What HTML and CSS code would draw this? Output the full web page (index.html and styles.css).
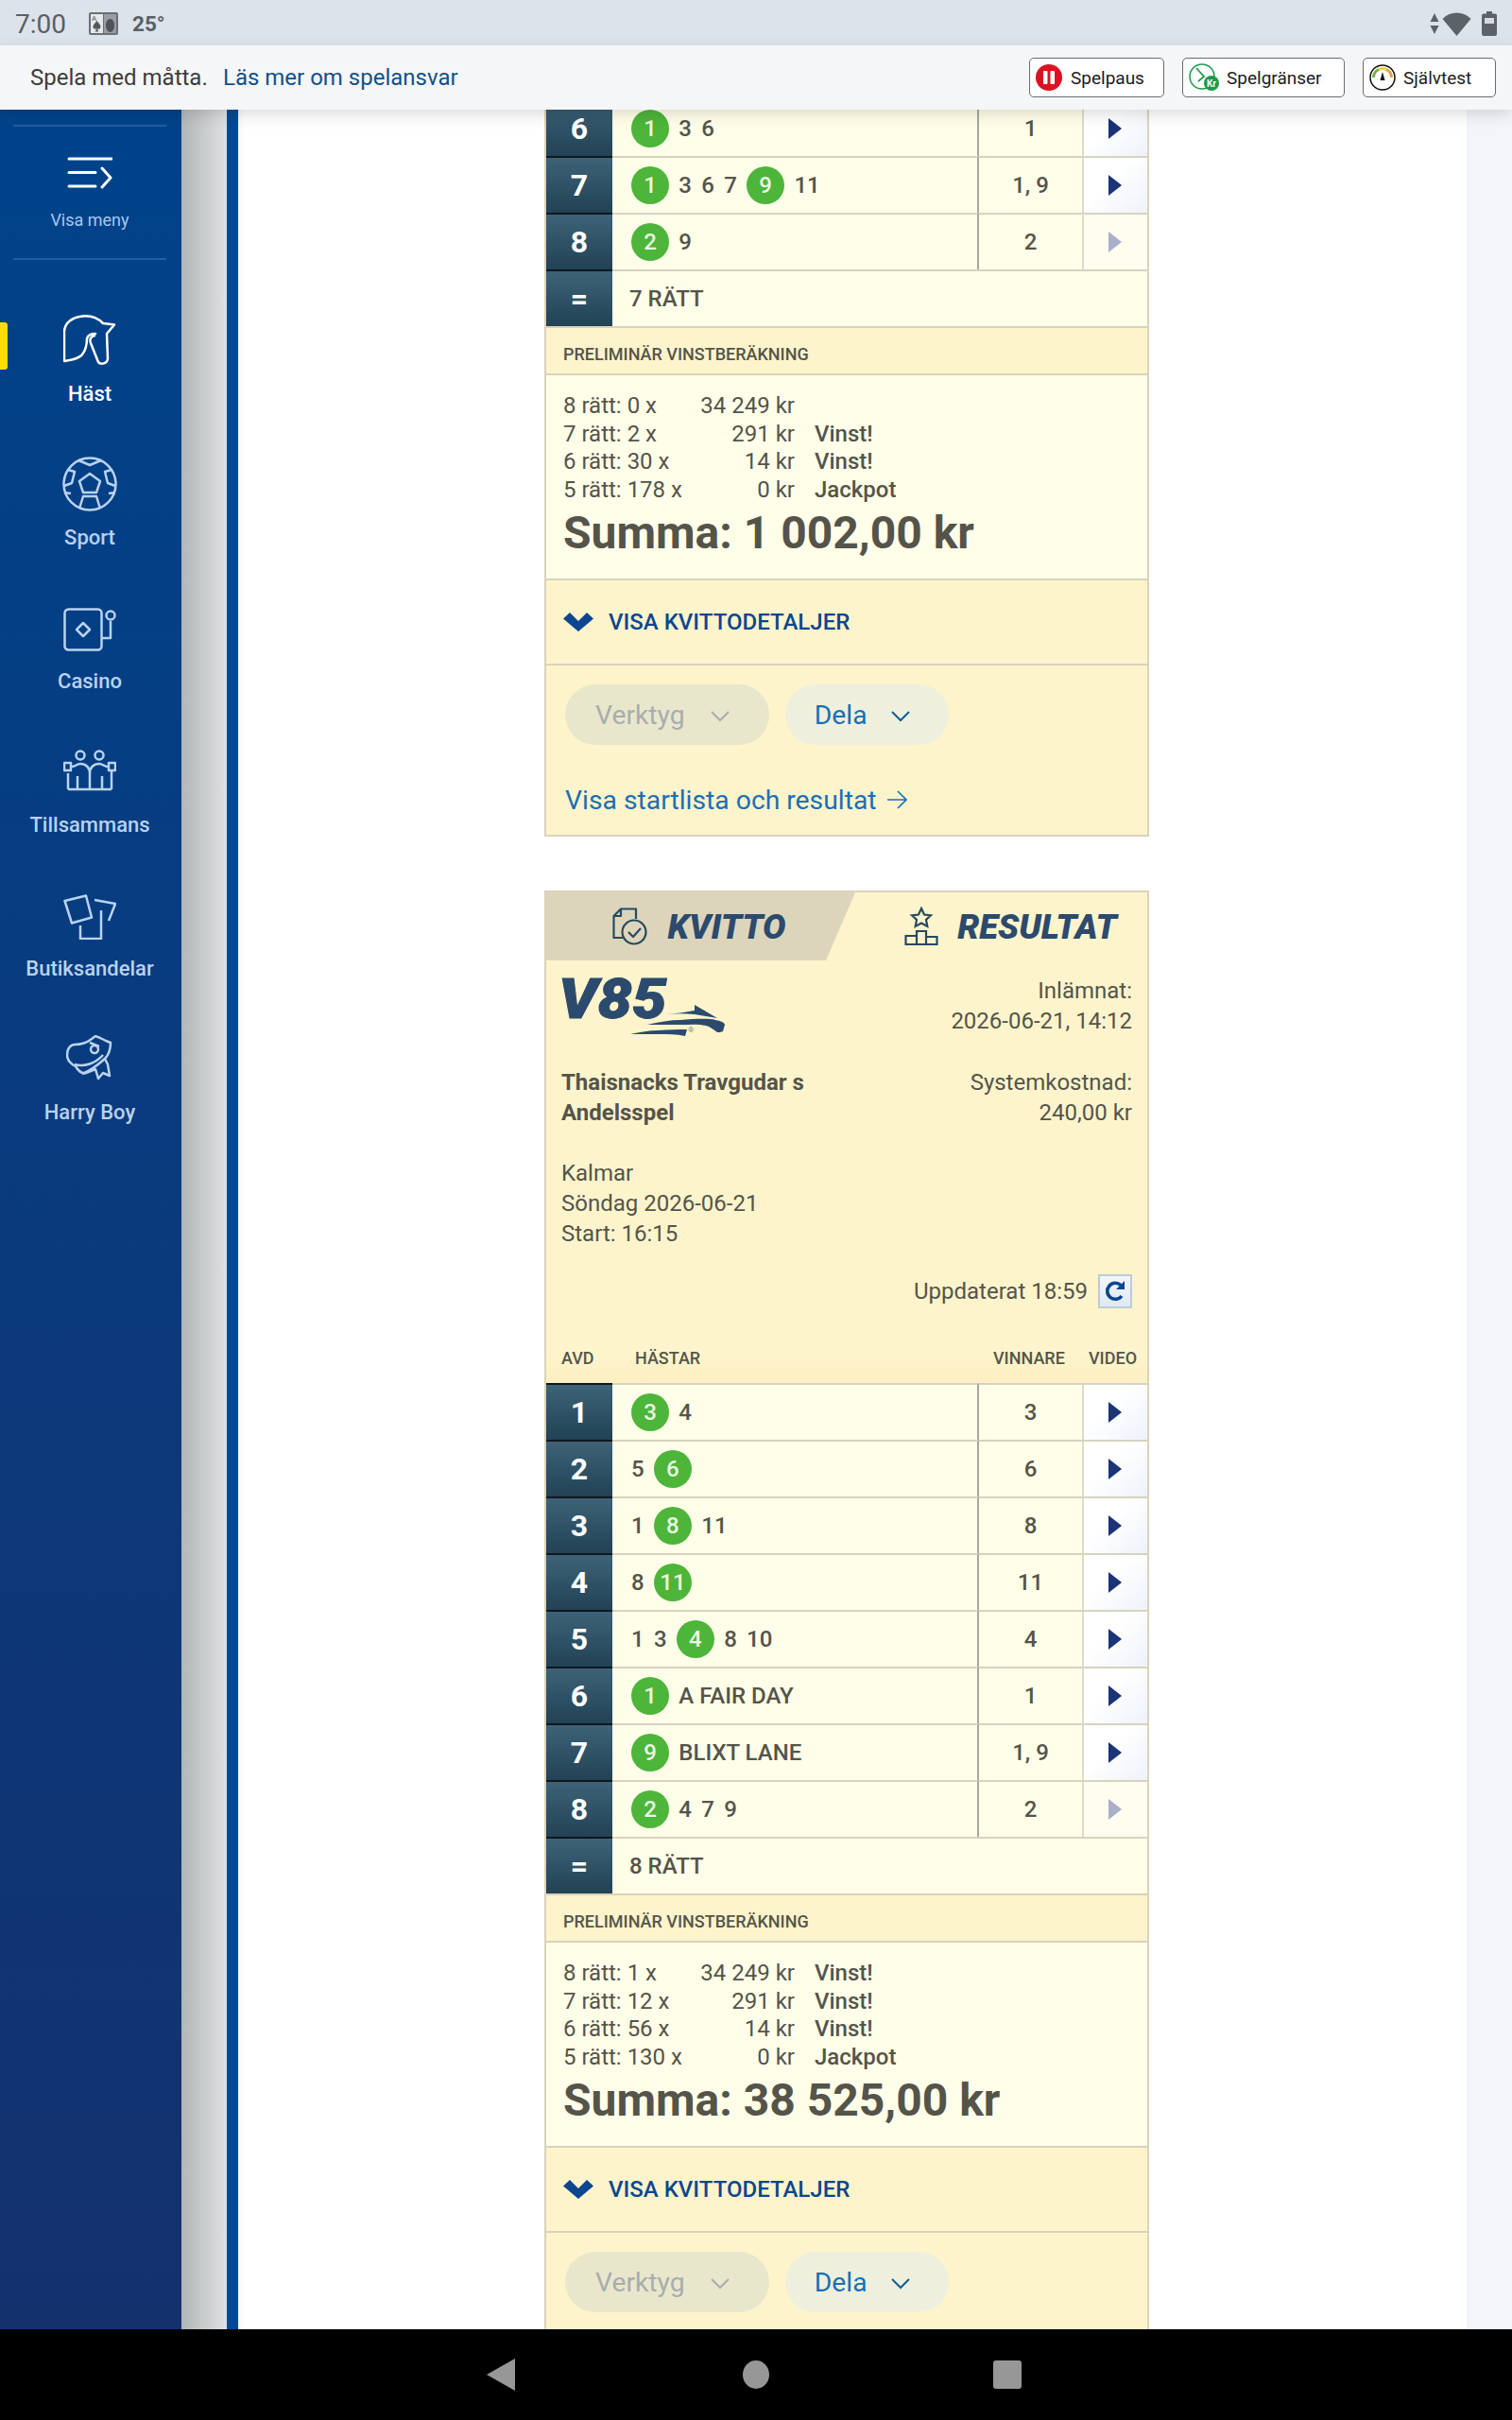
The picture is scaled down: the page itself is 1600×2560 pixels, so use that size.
FILE: index.html
```html
<!DOCTYPE html>
<html lang="sv">
<head>
<meta charset="UTF-8">
<meta name="viewport" content="width=device-width, initial-scale=1.0">
<title>Kvitto</title>
<link rel="stylesheet" href="styles.css">
</head>
<body>
<div class="status-bar">
  <span class="clock">7:00</span>
  <svg class="notif" width="31" height="24" viewBox="0 0 31 24">
    <rect width="31" height="24" rx="2" fill="#6a6f76"/>
    <rect x="2" y="2" width="13" height="20" fill="#e6e8ea"/>
    <rect x="16" y="2" width="13" height="20" fill="#9a9ea4"/>
    <text x="3" y="9" class="card-mark">A</text>
    <path d="M8.500 9c3 4 5 5 3.500 8-1 1-2.500 1-3-.5.300 2 .6 3 1.500 4h-4c.900-1 1.200-2 1.500-4-.5 1.500-2 1.500-3 .5C3.500 14 5.500 13 8.500 9z" fill="#55595f"/>
    <path d="M22.500 7c3 0 4.500 3 4.500 7s-2 7-4.500 7-4.500-3-4.500-7 1.500-7 4.500-7z" fill="#50545a"/>
  </svg>
  <span class="temp">25°</span>
  <span class="status-right">
    <svg width="10" height="22" viewBox="0 0 10 22"><path d="M5 0l4.500 9H.5zM5 22L.5 13h9z" fill="#5d6269"/></svg>
    <svg width="31" height="25" viewBox="0 0 31 25"><path d="M15.500 25L.5 7C5 2.500 10 .5 15.500.5S26 2.500 30.500 7z" fill="#5d6269"/></svg>
    <svg class="batt" width="16" height="26" viewBox="0 0 16 26"><path d="M5 0h6v2.500h3a2 2 0 0 1 2 2V24a2 2 0 0 1-2 2H2a2 2 0 0 1-2-2V4.500a2 2 0 0 1 2-2h3z" fill="#5d6269"/><rect x="3" y="7" width="10" height="6" fill="#d5dae0"/></svg>
  </span>
</div>

<div class="top-bar">
  <span class="top-text">Spela med måtta.</span>
  <a class="top-link">Läs mer om spelansvar</a>
  <div class="top-btns">
    <div class="top-btn btn-paus">
      <svg width="28" height="28" viewBox="0 0 28 28"><circle cx="14" cy="14" r="14" fill="#dd1122"/><rect x="8" y="7" width="4.500" height="14" rx="1" fill="#fff"/><rect x="15.500" y="7" width="4.500" height="14" rx="1" fill="#fff"/></svg>
      Spelpaus
    </div>
    <div class="top-btn btn-grans">
      <svg width="32" height="30" viewBox="0 0 32 30"><circle cx="14" cy="14" r="13" fill="none" stroke="#1b9a4b" stroke-width="1.500"/><path d="M8 5l8 9-6 5" fill="none" stroke="#1b9a4b" stroke-width="1.800"/><circle cx="24" cy="21" r="8" fill="#1b9a4b"/><text x="24" y="25" class="kr-mark">Kr</text></svg>
      Spelgränser
    </div>
    <div class="top-btn btn-test">
      <svg width="28" height="28" viewBox="0 0 28 28"><circle cx="14" cy="14" r="13" fill="#fff" stroke="#111" stroke-width="1.500"/><path d="M4.500 14A9.500 9.500 0 0 1 10 5.500" fill="none" stroke="#6fb043" stroke-width="3"/><path d="M10 5.500a9.500 9.500 0 0 1 8 0" fill="none" stroke="#e6d34a" stroke-width="3"/><path d="M18 5.500A9.500 9.500 0 0 1 23.500 14" fill="none" stroke="#e8a23a" stroke-width="3"/><path d="M14 8l2.500 9h-5z" fill="#111"/></svg>
      Självtest
    </div>
  </div>
</div>

<div class="main">
  <nav class="sidebar">
    <div class="menu-toggle">
      <svg width="48" height="34" viewBox="0 0 48 34" fill="none" stroke="#fff" stroke-width="3" stroke-linecap="round" stroke-linejoin="round"><path d="M2 2h45M2 16.500h28M2 31h28M37 12l9 10-9 10"/></svg>
      <span>Visa meny</span>
    </div>
    <div class="nav-item active">
      <svg width="56" height="56" viewBox="8 8 56 56" fill="none" stroke="#fff" stroke-width="2.500" stroke-linejoin="round" stroke-linecap="round"><path d="M9 57V25c1-9 9-14 16-15 10-2 19 1 25 7l12 1.500L54 28l1 26c0 6-8 7-10 4l-4-10-4-10c-1.500-4 0-7 4-8M9 57c7-1 15-2 19-7 5-6 5-12 5-17 1-3 4-5 9-5"/></svg>
      <span>Häst</span>
    </div>
    <div class="nav-item">
      <svg width="58" height="58" viewBox="0 0 58 58" fill="none" stroke="currentColor" stroke-width="2.500" stroke-linejoin="round"><ellipse cx="29" cy="29" rx="27.500" ry="27.500"/><path d="M29 18l11 8-4 12H22l-4-12zM17 4l12 5 12-5M6 14l7 2-3 12-8 3M52 14l-7 2 3 12 8 3M18 55l4-13h14l4 13M2 38l7 1M56 38l-7 1"/></svg>
      <span>Sport</span>
    </div>
    <div class="nav-item">
      <svg class="lift-4" width="56" height="46" viewBox="0 0 56 46" fill="none" stroke="currentColor" stroke-width="2.500" stroke-linejoin="round"><rect x="1.500" y="1.500" width="39" height="43" rx="4"/><path d="M21 16l7 7-7 7-7-7zM40.500 32H50V14"/><circle cx="50" cy="8" r="4.500"/></svg>
      <span>Casino</span>
    </div>
    <div class="nav-item">
      <svg class="lift-8" width="56" height="44" viewBox="0 0 56 44" fill="none" stroke="currentColor" stroke-width="2.500" stroke-linejoin="round"><circle cx="18" cy="6" r="4.500"/><circle cx="38" cy="6" r="4.500"/><path d="M5 42V25M1 14h7v8H1zM48 14h7v8h-7zM51 22v20M5 42h46M9 18c4 0 5-3 9-3 6 0 10 4 10 10v17M47 18c-4 0-5-3-9-3-6 0-10 4-10 10M15 28v14M41 28v14"/></svg>
      <span>Tillsammans</span>
    </div>
    <div class="nav-item">
      <svg class="lift-3" width="56" height="48" viewBox="0 0 56 48" fill="none" stroke="currentColor" stroke-width="2.500" stroke-linejoin="round"><path d="M1.500 7L24 1.500l6 23-21 6zM33 6l22 4-7 18M40 17v30H18V33"/></svg>
      <span>Butiksandelar</span>
    </div>
    <div class="nav-item">
      <svg class="lift-4" width="50" height="50" viewBox="11 12 50 50" fill="none" stroke="currentColor" stroke-width="2.500" stroke-linejoin="round"><path d="M20 22c-5 0-8 5-8 11s5 10 9 12c3 5 7 8 11 7l10-4 3 10 5-6 7 3-2-12-3-6c4-4 6-11 6-17l-5-2-6-3-5-2-4 3c-5 4-10 6-18 6z"/><path d="M20 43c10 3 22-1 30-10M28 53c8-3 16-9 24-16M36 20l10 4"/><circle cx="41" cy="27" r="4"/></svg>
      <span>Harry Boy</span>
    </div>
  </nav>
  <div class="gutter"></div>
  <div class="blue-rule"></div>

  <div class="content">
    <!-- first receipt, scrolled so only the tail of it shows -->
    <div class="card card-first">
      <div class="row">
        <div class="avd">6</div>
        <div class="horses"><span class="win">1</span><span>3</span><span>6</span></div>
        <div class="winner">1</div>
        <div class="video"><span class="play"></span></div>
      </div>
      <div class="row">
        <div class="avd">7</div>
        <div class="horses"><span class="win">1</span><span>3</span><span>6</span><span>7</span><span class="win">9</span><span>11</span></div>
        <div class="winner">1, 9</div>
        <div class="video"><span class="play"></span></div>
      </div>
      <div class="row">
        <div class="avd">8</div>
        <div class="horses"><span class="win">2</span><span>9</span></div>
        <div class="winner">2</div>
        <div class="video off"><span class="play"></span></div>
      </div>
      <div class="row row-sum">
        <div class="avd">=</div>
        <div class="ratt">7 RÄTT</div>
      </div>
      <div class="prelim-head">PRELIMINÄR VINSTBERÄKNING</div>
      <div class="prelim">
        <div class="payout">
          <span>8 rätt: 0 x</span><span class="amt">34 249 kr</span><b></b>
          <span>7 rätt: 2 x</span><span class="amt">291 kr</span><b>Vinst!</b>
          <span>6 rätt: 30 x</span><span class="amt">14 kr</span><b>Vinst!</b>
          <span>5 rätt: 178 x</span><span class="amt">0 kr</span><b>Jackpot</b>
        </div>
        <div class="summa">Summa: 1 002,00 kr</div>
      </div>
      <div class="details">
        <svg width="32" height="20" viewBox="0 0 32 20"><path d="M0 6.500L7 0l9 9 9-9 7 6.500L16 20z" fill="#0c468f"/></svg>
        VISA KVITTODETALJER
      </div>
      <div class="actions">
        <div class="pill pill-off">Verktyg
          <svg width="20" height="12" viewBox="0 0 20 12" fill="none" stroke="currentColor" stroke-width="2"><path d="M1 1l9 9 9-9"/></svg>
        </div>
        <div class="pill pill-dela">Dela
          <svg width="20" height="12" viewBox="0 0 20 12" fill="none" stroke="#0f5f94" stroke-width="2"><path d="M1 1l9 9 9-9"/></svg>
        </div>
      </div>
      <div class="start-link">Visa startlista och resultat
        <svg width="21" height="20" viewBox="0 0 21 20" fill="none" stroke="currentColor" stroke-width="1.600"><path d="M0 10h20M11 1l9 9-9 9"/></svg>
      </div>
    </div>

    <div class="card card-last">
      <div class="tabs">
        <div class="tab tab-on">
          <svg width="38" height="40" viewBox="0 0 38 40" fill="none" stroke="#27495f" stroke-width="2.200" stroke-linejoin="round"><path d="M11 32H1.500V9L9 1.500h16V12M9 1.500V9H1.500"/><circle cx="23" cy="26" r="12.500"/><path d="M17 26l5 5 8-9"/></svg>
          KVITTO
        </div>
        <div class="tab tab-off">
          <svg width="36" height="42" viewBox="0 0 36 42" fill="none" stroke="#27495f" stroke-width="2.200" stroke-linejoin="miter"><path d="M18 2l3 6.500 7 .8-5 4.700 1.300 7-6.300-3.500-6.300 3.500 1.300-7-5-4.700 7-.8zM13 26h10v14H13zM1.500 31H13v9H1.500zM23 32h11.500v8H23z"/></svg>
          RESULTAT
        </div>
      </div>
      <div class="info">
        <div class="info-left">
          <div class="logo">
            <span class="logo-text">V85</span>
            <svg class="logo-horse" width="100" height="36" viewBox="0 0 100 36"><path fill="#2c4a6d" d="M38 11C48 10 58 9 68 7V1l24 14-24-4C58 10 48 10 38 11zM18 22C30 19 42 17 53 17c14-1 30-2 37 0 6 1 10 3 10 5l-2 7c-2 1-4 1-6 1-4-3-8-6-12-7-8-2-18-1-27-1-12 0-24 0-35 0zM0 32c10-2 20-4 30-4 10-1 20-1 30-1l-2 7c-9-2-18-2-28-2-10 0-20 0-30 0z"/></svg>
            <span class="logo-reg">®</span>
          </div>
          <div class="team">Thaisnacks Travgudar s<br>Andelsspel</div>
          <div class="meet">Kalmar<br>Söndag 2026-06-21<br>Start: 16:15</div>
        </div>
        <div class="info-right">
          <div>Inlämnat:<br>2026-06-21, 14:12</div>
          <div class="cost">Systemkostnad:<br>240,00 kr</div>
        </div>
      </div>
      <div class="updated">Uppdaterat 18:59
        <div class="refresh">
          <svg width="22" height="24" viewBox="0 0 22 24" fill="none"><path d="M18 17a8.500 8.500 0 1 1-1-11.500" stroke="#0c468f" stroke-width="3.600"/><path d="M21 1v9h-9z" fill="#0c468f"/></svg>
        </div>
      </div>
      <div class="table-head">
        <span class="th-avd">AVD</span>
        <span class="th-horses">HÄSTAR</span>
        <span class="th-win">VINNARE</span>
        <span class="th-video">VIDEO</span>
      </div>
      <div class="row">
        <div class="avd">1</div>
        <div class="horses"><span class="win">3</span><span>4</span></div>
        <div class="winner">3</div>
        <div class="video"><span class="play"></span></div>
      </div>
      <div class="row">
        <div class="avd">2</div>
        <div class="horses"><span>5</span><span class="win">6</span></div>
        <div class="winner">6</div>
        <div class="video"><span class="play"></span></div>
      </div>
      <div class="row">
        <div class="avd">3</div>
        <div class="horses"><span>1</span><span class="win">8</span><span>11</span></div>
        <div class="winner">8</div>
        <div class="video"><span class="play"></span></div>
      </div>
      <div class="row">
        <div class="avd">4</div>
        <div class="horses"><span>8</span><span class="win">11</span></div>
        <div class="winner">11</div>
        <div class="video"><span class="play"></span></div>
      </div>
      <div class="row">
        <div class="avd">5</div>
        <div class="horses"><span>1</span><span>3</span><span class="win">4</span><span>8</span><span>10</span></div>
        <div class="winner">4</div>
        <div class="video"><span class="play"></span></div>
      </div>
      <div class="row">
        <div class="avd">6</div>
        <div class="horses"><span class="win">1</span><span>A FAIR DAY</span></div>
        <div class="winner">1</div>
        <div class="video"><span class="play"></span></div>
      </div>
      <div class="row">
        <div class="avd">7</div>
        <div class="horses"><span class="win">9</span><span>BLIXT LANE</span></div>
        <div class="winner">1, 9</div>
        <div class="video"><span class="play"></span></div>
      </div>
      <div class="row">
        <div class="avd">8</div>
        <div class="horses"><span class="win">2</span><span>4</span><span>7</span><span>9</span></div>
        <div class="winner">2</div>
        <div class="video off"><span class="play"></span></div>
      </div>
      <div class="row row-sum">
        <div class="avd">=</div>
        <div class="ratt">8 RÄTT</div>
      </div>
      <div class="prelim-head">PRELIMINÄR VINSTBERÄKNING</div>
      <div class="prelim">
        <div class="payout">
          <span>8 rätt: 1 x</span><span class="amt">34 249 kr</span><b>Vinst!</b>
          <span>7 rätt: 12 x</span><span class="amt">291 kr</span><b>Vinst!</b>
          <span>6 rätt: 56 x</span><span class="amt">14 kr</span><b>Vinst!</b>
          <span>5 rätt: 130 x</span><span class="amt">0 kr</span><b>Jackpot</b>
        </div>
        <div class="summa">Summa: 38 525,00 kr</div>
      </div>
      <div class="details">
        <svg width="32" height="20" viewBox="0 0 32 20"><path d="M0 6.500L7 0l9 9 9-9 7 6.500L16 20z" fill="#0c468f"/></svg>
        VISA KVITTODETALJER
      </div>
      <div class="actions">
        <div class="pill pill-off">Verktyg
          <svg width="20" height="12" viewBox="0 0 20 12" fill="none" stroke="currentColor" stroke-width="2"><path d="M1 1l9 9 9-9"/></svg>
        </div>
        <div class="pill pill-dela">Dela
          <svg width="20" height="12" viewBox="0 0 20 12" fill="none" stroke="#0f5f94" stroke-width="2"><path d="M1 1l9 9 9-9"/></svg>
        </div>
      </div>
    </div>
  </div>
  <div class="right-edge"></div>
</div>

<div class="nav-bar">
  <svg width="30" height="34" viewBox="0 0 30 34"><path d="M30 0v34L0 17z" fill="#979797"/></svg>
  <span class="nav-home"></span>
  <span class="nav-recent"></span>
</div>
</body>
</html>
```

FILE: styles.css
```css
* {
  box-sizing: border-box;
}
html, body {
  margin: 0;
  padding: 0;
}
body {
  width: 1600px;
  height: 2560px;
  overflow: hidden;
  display: flex;
  flex-direction: column;
  font-family: Roboto, 'Liberation Sans', sans-serif;
  font-size: 24px;
  color: #55544a;
  background: #fff;
}
svg {
  display: block;
  flex-shrink: 0;
}

/* android status bar */
.status-bar {
  height: 48px;
  flex-shrink: 0;
  display: flex;
  align-items: center;
  padding: 2px 16px 0;
  background: #dde3ea;
  color: #5a5f66;
}
.clock {
  font-size: 28px;
  width: 78px;
}
.notif {
  margin-right: 15px;
}
.card-mark {
  font-size: 8px;
  fill: #55595f;
}
.temp {
  font-size: 22.5px;
  font-weight: 700;
}
.status-right {
  margin-left: auto;
  display: flex;
  align-items: center;
  gap: 3px;
}
.batt {
  margin-left: 8px;
}

/* responsible gaming bar */
.top-bar {
  height: 68px;
  flex-shrink: 0;
  display: flex;
  align-items: center;
  padding: 0 17px 0 32px;
  background: #f5f6f7;
  box-shadow: 0 5px 16px rgba(0, 0, 0, 0.14);
  position: relative;
  z-index: 2;
}
.top-text {
  color: #3c3c3c;
  font-size: 24px;
  width: 204px;
}
.top-link {
  color: #12508a;
  font-size: 24px;
}
.top-btns {
  margin-left: auto;
  display: flex;
  gap: 19px;
}
.top-btn {
  height: 42px;
  display: flex;
  align-items: center;
  gap: 8px;
  padding: 0 6px;
  background: #fff;
  border: 1.5px solid #6b6b6b;
  border-radius: 5px;
  font-size: 19px;
  color: #1c1c1c;
}
.btn-paus {
  width: 143px;
}
.btn-paus svg {
  margin-right: 1px;
}
.btn-grans {
  width: 172px;
}
.btn-test {
  width: 141px;
}
.kr-mark {
  font-size: 10px;
  font-weight: 700;
  fill: #fff;
  text-anchor: middle;
}

/* page body */
.main {
  flex: 1;
  min-height: 0;
  display: flex;
  overflow: hidden;
}
.sidebar {
  width: 192px;
  flex-shrink: 0;
  padding: 16px 16px 0 14px;
  display: flex;
  flex-direction: column;
  background: linear-gradient(180deg, #00438b, #14316e);
  color: #b9d2ef;
}
.menu-toggle {
  height: 143px;
  display: flex;
  flex-direction: column;
  align-items: center;
  padding-top: 32px;
  border-top: 2px solid rgba(160, 190, 230, 0.22);
  border-bottom: 2px solid rgba(160, 190, 230, 0.22);
  font-size: 18px;
  color: #a8c8ec;
}
.menu-toggle span {
  margin-top: 22px;
}
.nav-item {
  height: 152px;
  display: flex;
  flex-direction: column;
  align-items: center;
  justify-content: flex-end;
  gap: 16px;
  font-size: 22px;
  font-weight: 500;
  line-height: 24px;
  position: relative;
}
.nav-item:nth-child(2) {
  height: 154px;
}
.nav-item .lift-3 {
  margin-bottom: 3px;
}
.nav-item .lift-4 {
  margin-bottom: 4px;
}
.nav-item .lift-8 {
  margin-bottom: 8px;
}
.nav-item.active {
  color: #fff;
}
.nav-item.active::before {
  content: "";
  position: absolute;
  left: -14px;
  top: 66px;
  width: 8px;
  height: 50px;
  background: #ffdd00;
  border-radius: 0 3px 3px 0;
}
.gutter {
  width: 48px;
  flex-shrink: 0;
  background: linear-gradient(90deg, #b2b6b7, #dfe1e3);
}
.blue-rule {
  width: 12px;
  flex-shrink: 0;
  background: #004b93;
}
.right-edge {
  width: 48px;
  flex-shrink: 0;
  background: #f3f5f8;
}
.content {
  flex: 1;
  padding-left: 324px;
  background: #fff;
  box-shadow: inset 8px 0 8px -8px rgba(0, 0, 0, 0.08);
}

/* receipt card */
.card {
  width: 640px;
  border: 2px solid #d9d3bb;
  background: #fdf4cc;
}
.card-first {
  margin-top: -11px;
  margin-bottom: 57px;
  border-top: 0;
}
.card-last {
  padding-bottom: 60px;
}
.tabs {
  height: 72px;
  display: flex;
}
.tab {
  display: flex;
  align-items: center;
  justify-content: center;
  gap: 20px;
  font-size: 36.5px;
  font-weight: 900;
  font-style: italic;
  color: #2c4a6d;
}
.tab-on {
  width: 327px;
  padding-right: 3px;
  background: #ddd5bb;
  clip-path: polygon(0 0, 100% 0, 296px 100%, 0 100%);
}
.tab-off {
  flex: 1;
  padding-left: 20px;
}
.info {
  display: flex;
  justify-content: space-between;
  padding: 16px 16px 0;
  line-height: 32px;
}
.logo {
  height: 97px;
  position: relative;
}
.logo-text {
  display: block;
  margin-left: -3px;
  font-size: 59px;
  line-height: 50px;
  font-weight: 900;
  font-style: italic;
  color: #2c4a6d;
  -webkit-text-stroke: 1px #2c4a6d;
  transform: scaleX(1.1);
  transform-origin: left center;
}
.logo-horse {
  position: absolute;
  left: 73px;
  top: 30px;
}
.logo-reg {
  position: absolute;
  left: 134px;
  top: 50px;
  font-size: 8px;
  line-height: 16px;
  color: #7c8a98;
}
.team {
  font-weight: 700;
}
.meet {
  margin-top: 32px;
}
.info-right {
  text-align: right;
}
.cost {
  margin-top: 33px;
}
.updated {
  margin-top: 27px;
  padding-right: 16px;
  display: flex;
  justify-content: flex-end;
  align-items: center;
  gap: 11px;
}
.refresh {
  width: 36px;
  height: 36px;
  display: flex;
  align-items: center;
  justify-content: center;
  background: linear-gradient(180deg, #f2f6fb, #dfe8f3);
  border: 2px solid #bccbdc;
}
.table-head {
  height: 79px;
  padding-top: 25px;
  display: flex;
  align-items: center;
  font-size: 18px;
  font-weight: 500;
  background: linear-gradient(180deg, #fdf4cc 60%, #fdefc2);
}
.th-avd {
  margin-left: 16px;
  width: 78px;
}
.th-horses {
  width: 379px;
}
.th-win {
  width: 101px;
}

/* result rows */
.row {
  height: 60px;
  display: flex;
  background: #fffee9;
}
.avd {
  width: 70px;
  flex-shrink: 0;
  display: flex;
  align-items: center;
  justify-content: center;
  border-top: 2px solid #10171c;
  background: linear-gradient(180deg, #3d6277, #224255);
  color: #fff;
  font-size: 32px;
  font-weight: 700;
}
.horses, .ratt, .winner, .video {
  display: flex;
  align-items: center;
  border-top: 2px solid #d6d3c0;
}
.horses {
  width: 388px;
  gap: 10.3px;
  padding-left: 20px;
  border-right: 2px solid #a8a89a;
  font-weight: 500;
}
.win {
  width: 40px;
  height: 40px;
  display: flex;
  align-items: center;
  justify-content: center;
  border-radius: 50%;
  background: #4db53a;
  color: #e9f8e3;
}
.winner {
  width: 109px;
  justify-content: center;
  font-weight: 500;
}
.video {
  flex: 1;
  padding-left: 26px;
  background: linear-gradient(135deg, #fff 40%, #eef2fa);
  border-left: 2px solid #dcdbcc;
}
.video.off {
  background: #fffdee;
}
.play {
  width: 0;
  height: 0;
  border-style: solid;
  border-width: 11.5px 0 11.5px 14px;
  border-color: transparent transparent transparent #1c3378;
}
.off .play {
  border-left-color: #a9b0c9;
}
.ratt {
  flex: 1;
  padding-left: 18px;
  font-weight: 500;
}

/* payout block */
.prelim-head {
  height: 52px;
  padding: 6px 0 0 18px;
  display: flex;
  align-items: center;
  border-top: 2px solid #d9d3bb;
  border-bottom: 2px solid #d9d3bb;
  font-size: 18px;
  font-weight: 500;
}
.prelim {
  height: 215px;
  padding: 18px 18px 0;
  background: #fffee9;
}
.payout {
  display: grid;
  grid-template-columns: 130px 115px 1fr;
  line-height: 29.7px;
  white-space: nowrap;
}
.payout .amt {
  text-align: right;
}
.payout b {
  padding-left: 21px;
  font-weight: 500;
}
.summa {
  font-size: 48px;
  line-height: 60px;
  font-weight: 700;
}
.details {
  height: 92px;
  display: flex;
  align-items: center;
  gap: 16px;
  padding: 0 18px;
  border-top: 2px solid #d9d3bb;
  border-bottom: 2px solid #d9d3bb;
  color: #0c468f;
  font-weight: 500;
}
.actions {
  display: flex;
  gap: 17px;
  padding: 20px 20px 0;
}
.pill {
  height: 64px;
  display: flex;
  align-items: center;
  gap: 27px;
  padding: 0 42px 0 32px;
  border-radius: 32px;
  font-size: 28.3px;
}
.pill svg {
  margin-top: 3px;
}
.pill-off {
  background: #e9e7cb;
  color: #a7adb0;
}
.pill-dela {
  gap: 25px;
  padding: 0 41px 0 31px;
  background: #eef0dd;
  color: #1a6fb5;
}
.start-link {
  display: flex;
  align-items: center;
  gap: 11px;
  height: 95px;
  padding: 21px 0 0 20px;
  color: #1a6fb5;
  font-size: 28.3px;
}

/* android nav bar */
.nav-bar {
  height: 96px;
  flex-shrink: 0;
  display: flex;
  align-items: center;
  padding-left: 515px;
  background: #000;
  position: relative;
  z-index: 2;
}
.nav-home {
  width: 28px;
  height: 30px;
  margin-left: 241px;
  border-radius: 50%;
  background: #979797;
}
.nav-recent {
  width: 30px;
  height: 30px;
  margin-left: 237px;
  border-radius: 3px;
  background: #979797;
}
```
